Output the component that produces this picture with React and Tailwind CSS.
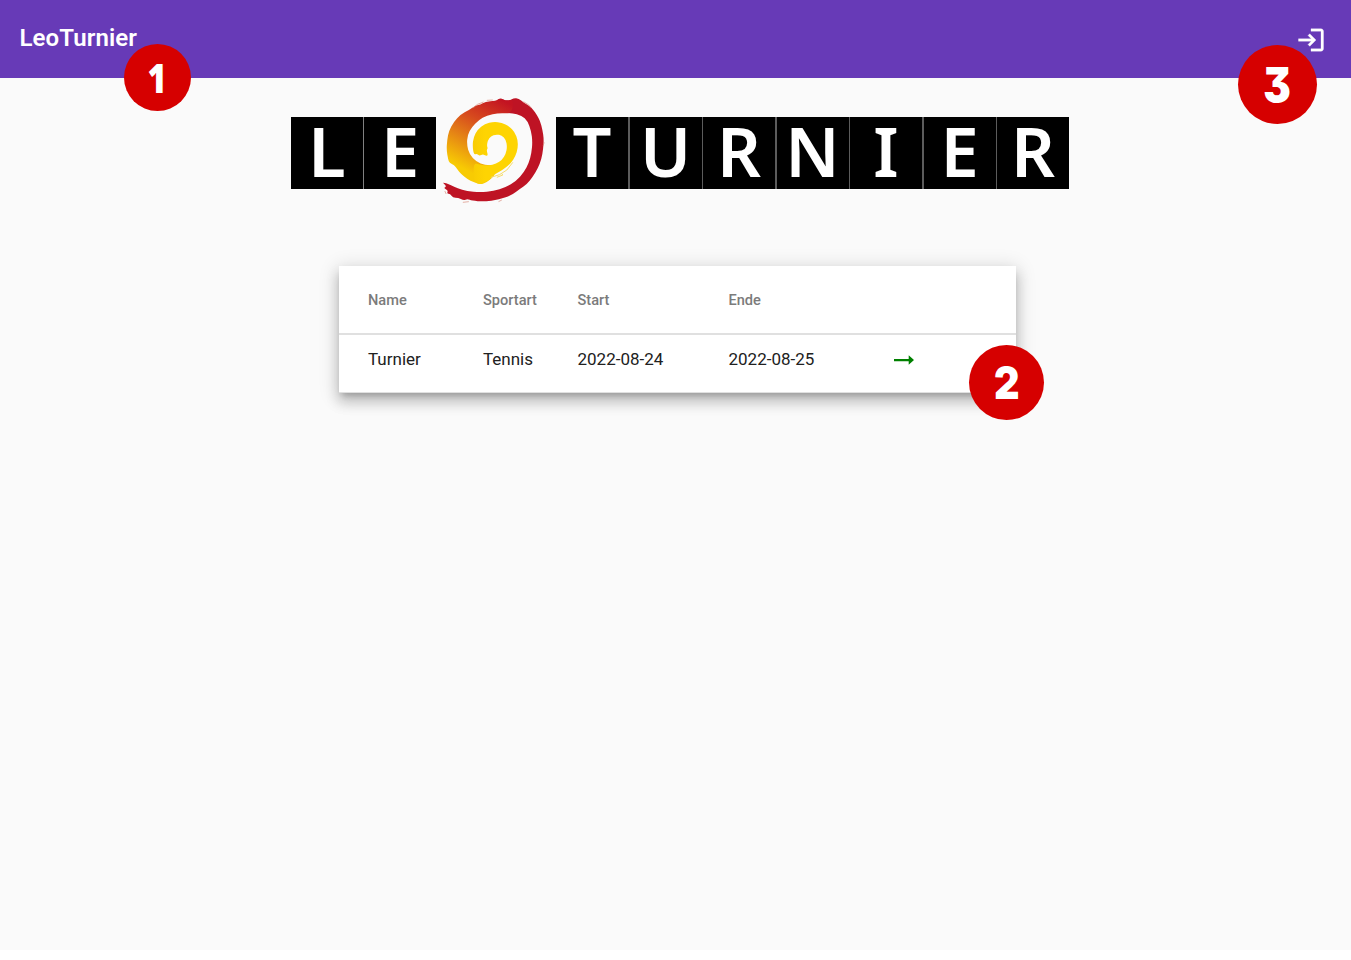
function LoginIcon() {
  return (
    <svg
      viewBox="0 0 24 24"
      className="mt-[25px] h-[30px] w-[30px] fill-white stroke-white stroke-[0.25]"
    >
      <path d="M11 7 9.6 8.4l2.6 2.6H2v2h10.2l-2.6 2.6L11 17l5-5-5-5zm9 12h-8v2h8c1.1 0 2-.9 2-2V5c0-1.1-.9-2-2-2h-8v2h8v14z" />
    </svg>
  );
}

function Tile({ letter }) {
  return (
    <span className="block h-[72px] w-[72px] bg-black text-center font-['Noto_Sans'] text-[68.5px] leading-[68.5px] font-[560] text-white">
      {letter}
    </span>
  );
}

// Closed curve through the midpoints of neighbouring points.
function smooth(list) {
  const p = list.split(" ").map((s) => s.split(",").map(Number));
  const mid = (a, b) => `${(a[0] + b[0]) / 2} ${(a[1] + b[1]) / 2}`;
  let d = `M${mid(p[p.length - 1], p[0])}`;
  p.forEach((a, i) => {
    d += `Q${a[0]} ${a[1]} ${mid(a, p[(i + 1) % p.length])}`;
  });
  return d + "Z";
}

const redBand = smooth(
  "196,46 212,39 224,46 240,46 250,39 266,40 280,53 298,62 309,74 320,90 330,108 337,135 341,162 339,192 334,222 323,250 308,275 290,298 268,312 246,330 207,344 160,350 125,347 112,342 100,346 84,338 68,338 60,326 50,326 54,316 40,309 50,304 34,290 62,300 82,310 110,318 150,322 190,318 226,307 258,288 281,262 296,234 304,204 307,170 303,138 292,108 275,92 245,84 200,83"
);
const orangeBand = smooth(
  "250,44 230,48 212,40 196,48 165,50 150,60 138,60 115,76 92,88 70,112 56,138 51,165 49,195 54,224 58,234 72,240 82,254 92,266 112,283 130,291 150,299 170,292 195,270 200,240 165,241 138,230 118,208 110,180 112,150 125,126 145,106 170,91 205,84 245,86"
);
const yellowSwirl = smooth(
  "130,232 150,240 175,241 198,237 216,224 227,206 231,185 227,164 215,151 198,148 182,153 173,166 170,182 173,190 169,196 174,212 164,212 158,207 148,213 140,206 131,209 127,182 130,157 142,134 164,117 190,110 215,113 237,124 254,142 263,165 263,190 256,213 242,235 224,250 206,262 188,270 178,286 165,289 152,299 130,290"
);

function Spiral() {
  return (
    <svg viewBox="30 30 320 330" className="mr-[9px] ml-[4px] h-[110px] w-[107px] shrink-0">
      <defs>
        <linearGradient id="band" gradientUnits="userSpaceOnUse" x1="245" y1="60" x2="135" y2="270">
          <stop offset="0" stopColor="#c31322" />
          <stop offset="0.35" stopColor="#d6481e" />
          <stop offset="0.65" stopColor="#e58415" />
          <stop offset="1" stopColor="#f8cb03" />
        </linearGradient>
        <linearGradient id="swirl" gradientUnits="userSpaceOnUse" x1="125" y1="0" x2="165" y2="0">
          <stop offset="0" stopColor="#f8cb03" />
          <stop offset="1" stopColor="#fed402" />
        </linearGradient>
      </defs>
      <path fill="#be1324" d={redBand} />
      <path fill="url(#band)" d={orangeBand} />
      <path fill="url(#swirl)" d={yellowSwirl} />
      <path
        fill="none"
        stroke="#f6dc6a"
        strokeWidth="3"
        d="M182 277 L208 269 L230 255 L248 232 M200 277 L218 270 L214 266"
      />
      <path
        fill="none"
        stroke="#d98a78"
        strokeWidth="2"
        d="M128 69 L142 58 L160 51 M170 46 L188 45 M280 50 L296 60 L302 68 M342 172 L339 182 M44 318 L48 327 M98 352 L116 350 M205 350 L215 345"
      />
    </svg>
  );
}

const columns = "grid grid-cols-[115px_94.5px_151px_165px_1fr] pl-[29px]";

export default function App() {
  return (
    <div className="relative flex h-[960px] flex-col overflow-hidden bg-white font-[Roboto,sans-serif]">
      <header className="flex h-[78px] shrink-0 items-start justify-between bg-[#673ab7] pr-[25px] pl-[19.5px] text-white">
        <h1 className="pt-[22px] text-[24px] leading-8 font-semibold tracking-[0.1px]">LeoTurnier</h1>
        <LoginIcon />
      </header>

      <main className="flex h-[872px] shrink-0 flex-col bg-[#fafafa]">
        <div className="flex h-[188px] items-start pt-[17px] pl-[291px]">
          <div className="mt-[22px] flex gap-px bg-[#808080]">
            {["L", "E"].map((l) => (
              <Tile key={l} letter={l} />
            ))}
          </div>
          <Spiral />
          <div className="mt-[22px] flex gap-[1.5px] bg-[#5c5c5c]">
            {["T", "U", "R", "N", "I", "E", "R"].map((l, i) => (
              <Tile key={i} letter={l} />
            ))}
          </div>
        </div>

        <section className="ml-[339px] h-[127px] w-[677px] bg-white shadow-[0_5px_6px_-3px_rgba(0,0,0,0.2),0_9px_12px_1px_rgba(0,0,0,0.16),0_3px_18px_2px_rgba(0,0,0,0.14)]">
          <div className={`${columns} h-[69px] items-center border-b-2 border-[#e0e0e0] pt-[2px] text-[14.6px] font-[470] text-[#7b7b7b]`}>
            <span>Name</span>
            <span>Sportart</span>
            <span>Start</span>
            <span>Ende</span>
          </div>
          <div className={`${columns} h-[58px] border-b border-[#e0e0e0] pt-[12px] text-[17px] leading-6 font-normal text-[#212121]`}>
            <span>Turnier</span>
            <span>Tennis</span>
            <span>2022-08-24</span>
            <span>2022-08-25</span>
            <svg viewBox="0 0 20 10" className="mt-2 h-[10px] w-5 fill-[#008000]">
              <path d="M0 4H14.7V0.3L20 5L14.7 9.7V6.2H0Z" />
            </svg>
          </div>
        </section>
      </main>

      <span className="absolute top-[44px] left-[124px] flex h-[67px] w-[67px] items-center justify-center rounded-full bg-[#d60000] font-['Open_Sans'] text-[41px] leading-none font-extrabold text-white">
        <span className="-mt-px scale-x-[0.8]">1</span>
      </span>
      <span className="absolute top-[345px] left-[969px] flex h-[75px] w-[75px] items-center justify-center rounded-full bg-[#d60000] font-[Inter] text-[46px] leading-none font-black text-white">
        <span className="-mt-px scale-x-[0.86]">2</span>
      </span>
      <span className="absolute top-[45px] left-[1238px] flex h-[79px] w-[79px] items-center justify-center rounded-full bg-[#d60000] font-[Inter] text-[48px] leading-none font-black text-white [font-feature-settings:'cv09']">
        <span className="scale-x-[0.86]">3</span>
      </span>
    </div>
  );
}
